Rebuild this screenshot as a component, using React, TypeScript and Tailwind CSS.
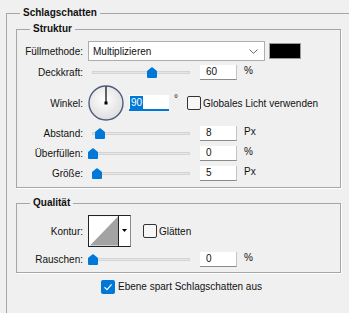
import React from "react";

const font = "font-['Liberation_Sans',Arial,sans-serif]";

function Thumb() {
  return (
    <svg width="10" height="11" viewBox="0 0 10 11">
      <path d="M0 4.6 Q0 4 0.6 3.5 L4.3 0.4 Q5 -0.1 5.7 0.4 L9.4 3.5 Q10 4 10 4.6 V10 Q10 11 9 11 H1 Q0 11 0 10 Z" fill="#0078d7" />
    </svg>
  );
}

function Slider({ pos }: { pos: number }) {
  return (
    <div className="relative h-[15px] w-[106px]">
      <div className="absolute left-[4px] right-[4px] top-[6px] h-[3px] border border-[#d4d4d4] bg-[#e6e6e6]" />
      <div className="absolute top-[2px]" style={{ left: pos }}>
        <Thumb />
      </div>
    </div>
  );
}

function NumField({ value }: { value: string }) {
  return (
    <div className="flex h-[15px] w-[37px] items-center border-b border-r border-b-[#8a8a8a] border-r-[#c4c4c4] bg-white pl-[6px] leading-none">
      {value}
    </div>
  );
}

function Check({ checked, className = "" }: { checked?: boolean; className?: string }) {
  if (checked)
    return (
      <span className={`grid h-[14px] w-[14px] place-items-center rounded-[2px] bg-[#0078d7] ${className}`}>
        <svg width="10" height="10" viewBox="0 0 10 10" fill="none" stroke="#fff" strokeWidth="1.2">
          <path d="M1.5 5.2 4 7.6 8.6 2.4" />
        </svg>
      </span>
    );
  return <span className={`block h-[14px] w-[14px] rounded-[2px] border border-[#333] bg-[#f7f7f7] ${className}`} />;
}

function SliderRow({ label, pos, value, unit }: { label: string; pos: number; value: string; unit: string }) {
  return (
    <div className="flex h-[15px] items-center">
      <span className="w-[66px] text-right">{label}</span>
      <div className="ml-[5px]">
        <Slider pos={pos} />
      </div>
      <div className="ml-[6px]">
        <NumField value={value} />
      </div>
      <span className="ml-[7px] self-start leading-[11px]">{unit}</span>
    </div>
  );
}

function Dial() {
  return (
    <svg width="36" height="36" viewBox="0 0 36 36">
      <defs>
        <radialGradient id="dg" cx="45%" cy="40%" r="60%">
          <stop offset="0%" stopColor="#ffffff" />
          <stop offset="100%" stopColor="#dedede" />
        </radialGradient>
      </defs>
      <circle cx="18" cy="18" r="17" fill="url(#dg)" stroke="#4e5c80" strokeWidth="1.4" />
      <path d="M18 1.5V18" stroke="#000" strokeWidth="1.2" />
      <rect x="16.5" y="16.5" width="3" height="3" fill="#000" />
    </svg>
  );
}

const group = "border border-[#a6a6a6] shadow-[1px_1px_0_#fff]";

export default function App() {
  return (
    <div className={`h-[313px] w-[349px] overflow-hidden bg-[#f0f0f0] text-[10px] text-[#111] ${font}`}>
      <fieldset className={`ml-[6px] mt-[5px] h-[340px] w-[370px] pl-[9px] ${group}`}>
        <legend className="ml-[4px] px-[3px] font-bold leading-[16px]">Schlagschatten</legend>

        <fieldset className={`w-[325px] pb-[6px] ${group}`}>
          <legend className="ml-[13px] px-[3px] font-bold leading-[16px]">Struktur</legend>
          <div className="flex flex-col gap-[4px] pt-[4px]">
            <div className="flex h-[20px] items-center">
              <span className="w-[66px] text-right">Füllmethode:</span>
              <div className="ml-[5px] flex h-[20px] w-[177px] items-center justify-between border border-[#adadad] bg-white pl-[4px] pr-[6px]">
                <span>Multiplizieren</span>
                <svg width="9" height="5" viewBox="0 0 9 5" fill="none" stroke="#555" strokeWidth="0.9">
                  <path d="M0.5 0.5 4.5 4.3 8.5 0.5" />
                </svg>
              </div>
              <span className="ml-[4px] h-[16px] w-[32px] border border-[#9a9a9a] bg-black" />
            </div>

            <SliderRow label="Deckkraft:" pos={59} value="60" unit="%" />

            <div className="mt-[1px] flex h-[36px] items-center">
              <span className="w-[66px] text-right">Winkel:</span>
              <div className="ml-[5px]">
                <Dial />
              </div>
              <div className="ml-[5px] flex h-[16px] w-[40px] items-center border-b-2 border-[#0078d7] bg-white pl-[1px]">
                <span className="bg-[#0078d7] px-[1px] leading-[13px] text-white">90</span>
              </div>
              <span className="ml-[5px] self-start mt-[9px] leading-[10px]">°</span>
              <Check className="ml-[9px]" />
              <span className="ml-[2px]">Globales Licht verwenden</span>
            </div>

            <div className="mt-[1px] flex flex-col gap-[5px]">
              <SliderRow label="Abstand:" pos={7} value="8" unit="Px" />
              <SliderRow label="Überfüllen:" pos={0} value="0" unit="%" />
              <SliderRow label="Größe:" pos={4} value="5" unit="Px" />
            </div>
          </div>
        </fieldset>

        <fieldset className={`mt-[7px] w-[325px] pb-[5px] ${group}`}>
          <legend className="ml-[13px] px-[3px] font-bold leading-[16px]">Qualität</legend>
          <div className="flex flex-col gap-[5px] pt-[4px]">
            <div className="flex h-[32px] items-center">
              <span className="w-[66px] text-right">Kontur:</span>
              <div className="ml-[5px] flex h-[32px] border border-[#222] border-r-[#8c8c8c]">
                <svg width="30" height="30" viewBox="0 0 30 30" className="border-r border-[#222]">
                  <rect width="30" height="30" fill="#fff" />
                  <polygon points="1,30 30,0 30,30" fill="#a3a3a3" />
                </svg>
                <div className="flex w-[11px] justify-center bg-white pt-[13px]">
                  <svg width="5" height="3" viewBox="0 0 5 3">
                    <path d="M0 0H5L2.5 3Z" fill="#000" />
                  </svg>
                </div>
              </div>
              <Check className="ml-[12px]" />
              <span className="ml-[2px]">Glätten</span>
            </div>
            <SliderRow label="Rauschen:" pos={0} value="0" unit="%" />
          </div>
        </fieldset>

        <div className="ml-[85px] mt-[6px] flex items-center">
          <Check checked />
          <span className="ml-[3px]">Ebene spart Schlagschatten aus</span>
        </div>
      </fieldset>
    </div>
  );
}
